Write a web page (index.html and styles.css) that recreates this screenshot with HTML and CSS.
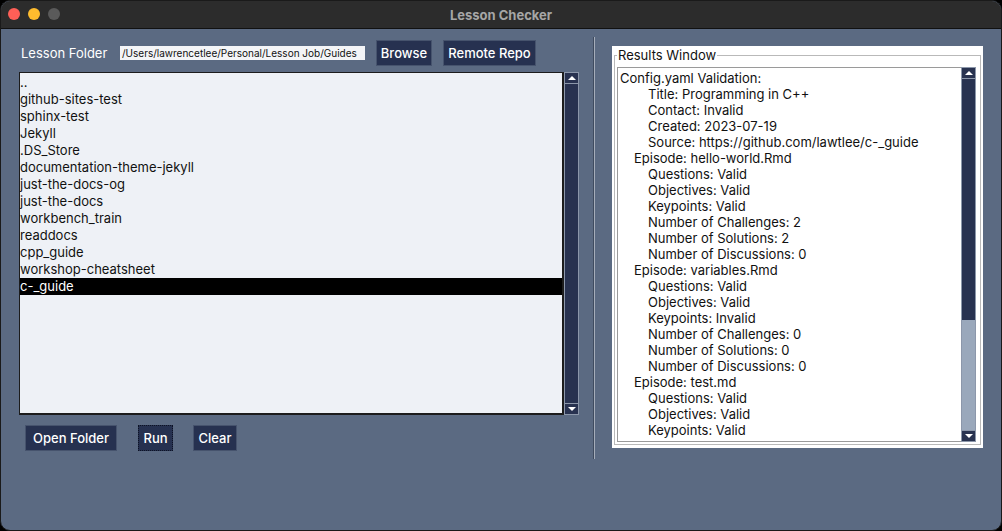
FILE: index.html
```html
<!DOCTYPE html>
<html>
<head>
<meta charset="utf-8">
<link rel="stylesheet" href="styles.css">
</head>
<body>
<div class="window">
  <div class="titlebar">
    <div class="lights">
      <span class="light red"></span>
      <span class="light yellow"></span>
      <span class="light gray"></span>
    </div>
    <div class="title">Lesson Checker</div>
  </div>
  <div class="content">
    <div class="left">
      <div class="toprow">
        <span class="label">Lesson Folder</span>
        <div class="pathinput">/Users/lawrencetlee/Personal/Lesson Job/Guides</div>
        <button class="btn browse">Browse</button>
        <button class="btn remote">Remote Repo</button>
      </div>
      <div class="listwrap">
        <div class="listbox">
          <div class="item">..</div>
          <div class="item">github-sites-test</div>
          <div class="item">sphinx-test</div>
          <div class="item">Jekyll</div>
          <div class="item">.DS_Store</div>
          <div class="item">documentation-theme-jekyll</div>
          <div class="item">just-the-docs-og</div>
          <div class="item">just-the-docs</div>
          <div class="item">workbench_train</div>
          <div class="item">readdocs</div>
          <div class="item">cpp_guide</div>
          <div class="item">workshop-cheatsheet</div>
          <div class="item selected">c-_guide</div>
        </div>
        <div class="scrollbar">
          <div class="arrow up"></div>
          <div class="trough"></div>
          <div class="arrow down"></div>
        </div>
      </div>
      <div class="bottomrow">
        <button class="btn open">Open Folder</button>
        <button class="btn run">Run</button>
        <button class="btn clear">Clear</button>
      </div>
    </div>
    <div class="separator"></div>
    <div class="right">
      <div class="frame">
        <div class="legend-line"></div>
        <div class="legend">Results Window</div>
        <div class="resultwrap">
          <div class="results">
            <div class="l0">Config.yaml Validation:</div>
            <div class="l2">Title: Programming in C++</div>
            <div class="l2">Contact: Invalid</div>
            <div class="l2">Created: 2023-07-19</div>
            <div class="l2">Source: https://github.com/lawtlee/c-_guide</div>
            <div class="l1">Episode: hello-world.Rmd</div>
            <div class="l2">Questions: Valid</div>
            <div class="l2">Objectives: Valid</div>
            <div class="l2">Keypoints: Valid</div>
            <div class="l2">Number of Challenges: 2</div>
            <div class="l2">Number of Solutions: 2</div>
            <div class="l2">Number of Discussions: 0</div>
            <div class="l1">Episode: variables.Rmd</div>
            <div class="l2">Questions: Valid</div>
            <div class="l2">Objectives: Valid</div>
            <div class="l2">Keypoints: Invalid</div>
            <div class="l2">Number of Challenges: 0</div>
            <div class="l2">Number of Solutions: 0</div>
            <div class="l2">Number of Discussions: 0</div>
            <div class="l1">Episode: test.md</div>
            <div class="l2">Questions: Valid</div>
            <div class="l2">Objectives: Valid</div>
            <div class="l2">Keypoints: Valid</div>
          </div>
          <div class="scrollbar rs">
            <div class="arrow up"></div>
            <div class="trough">
              <div class="thumb"></div>
            </div>
            <div class="arrow down"></div>
          </div>
        </div>
      </div>
    </div>
  </div>
</div>
</body>
</html>
```
FILE: styles.css
```css
* { box-sizing: border-box; }
html, body { margin: 0; padding: 0; background: #000; }
body { width: 1002px; height: 531px; overflow: hidden; font-family: "Inter", "Liberation Sans", sans-serif; }

.window {
  width: 1002px; height: 531px;
  background: #5b6a82;
  border-radius: 10px;
  overflow: hidden;
  border: 1px solid #1a1a1a;
  display: flex; flex-direction: column;
}

.titlebar {
  height: 28px; flex: none;
  background: #2c2c2c;
  border-bottom: 1px solid #111;
  position: relative;
  display: flex; align-items: center; justify-content: center;
}
.lights { position: absolute; left: 7px; top: 7px; display: flex; gap: 8px; }
.light { width: 12px; height: 12px; border-radius: 50%; display: block; }
.red { background: #fe5f57; }
.yellow { background: #febc2e; }
.gray { background: #5a5a5a; }
.title { color: #a6a6a6; font-size: 13px; font-weight: 700; }

.content { flex: 1; display: flex; }

.left { width: 578px; padding-left: 18px; padding-top: 11px; display: flex; flex-direction: column; }

.toprow { display: flex; align-items: center; height: 26px; }
.label { color: #fff; font-size: 13px; margin-left: 2px; width: 99px; }
.pathinput {
  width: 245px; height: 14px;
  background: #f4f5f7;
  font-size: 10px; line-height: 14px;
  color: #111; padding-left: 2px;
  white-space: nowrap; overflow: hidden;
}

.btn {
  font-family: "Inter", "Liberation Sans", sans-serif;
  font-size: 13px; font-weight: 500;
  color: #fff;
  background: #263150;
  border: 1px solid #46536d;
  height: 26px; padding: 0;
  border-radius: 0;
  white-space: nowrap;
  text-align: center;
}
.browse { margin-left: 11px; width: 56px; }
.remote { margin-left: 11px; width: 93px; }

.listwrap { display: flex; margin-top: 6px; height: 343px; }
.listbox {
  width: 545px; height: 343px;
  background: #eef1f6;
  border: 1px solid #1c1c1c;
  border-right-width: 2px; border-bottom-width: 2px;
  padding-top: 1px;
  font-size: 13px; color: #111;
}
.item { height: 17px; line-height: 17px; padding-left: 0; white-space: nowrap; }
.item.selected { background: #000; color: #fff; }

.scrollbar {
  width: 15px; height: 100%;
  display: flex; flex-direction: column;
  border: 1px solid #8c97aa;
  background: #283250;
}
.arrow { height: 11px; flex: none; position: relative; background: #283250; border-bottom: 1px solid #8c97aa; }
.arrow.down { border-bottom: none; border-top: 1px solid #8c97aa; }
.arrow::after {
  content: ""; position: absolute; left: 3px; top: 3px;
  border-left: 4px solid transparent; border-right: 4px solid transparent;
}
.arrow.up::after { border-bottom: 4px solid #fff; }
.arrow.down::after { border-top: 4px solid #fff; }
.trough { flex: 1; background: #283250; }

.bottomrow { display: flex; margin-top: 10px; margin-left: 6px; }
.open { width: 92px; }
.run { margin-left: 21px; width: 35px; border-style: dotted; border-color: #0d1224; }
.clear { margin-left: 20px; width: 44px; }

.separator {
  width: 2px; margin-left: 14px; margin-top: 8px; height: 422px;
  background: #a5adba;
  border-left: 1px solid #3f4b5f;
}

.right { padding-left: 17px; padding-top: 17px; }
.frame {
  width: 371px; height: 402px;
  background: #fff;
  position: relative;
  padding: 21px 5px 6px 5px;
}
.legend-line {
  position: absolute; left: 2px; right: 2px; top: 9px; bottom: 3px;
  border: 1px solid #b9b9b9;
}
.legend {
  position: absolute; left: 5px; top: 1px;
  background: #fff; padding: 0 1px;
  font-size: 13px; color: #111; line-height: 16px;
}
.resultwrap { display: flex; height: 375px; position: relative; }
.results {
  width: 344px; height: 375px;
  border: 1px solid #9a9a9a;
  border-right: none;
  padding-top: 2px; padding-left: 2px;
  font-size: 13px; color: #111; background: #fff;
  overflow: hidden;
}
.results div { height: 16px; line-height: 16px; white-space: nowrap; }
.l1 { padding-left: 14px; }
.l2 { padding-left: 28px; }
.rs { height: 375px; }
.rs .trough { background: #9aa8bb; display: flex; flex-direction: column; }
.thumb { height: 241px; background: #283250; }
```
